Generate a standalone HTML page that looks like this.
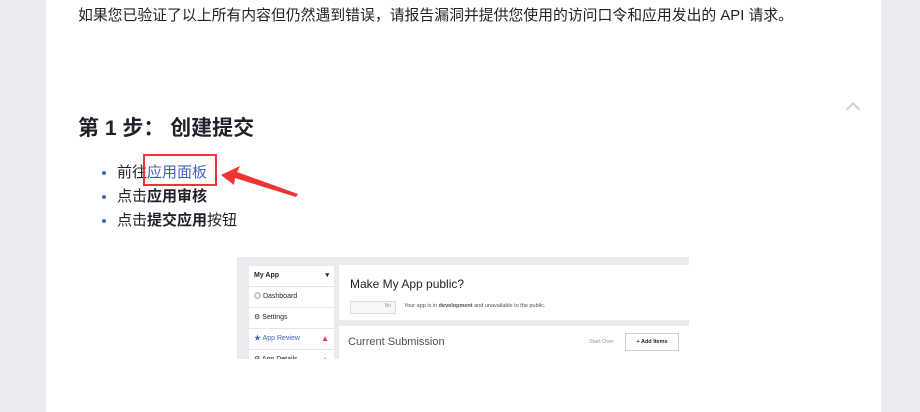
<!DOCTYPE html>
<html><head><meta charset="utf-8"><style>
body{margin:0;width:920px;height:412px;background:#e9ebee;overflow:hidden;font-family:"Liberation Sans","Noto Sans CJK SC",sans-serif;color:#1d2129;position:relative}
.page{position:absolute;left:46px;top:0;width:835px;height:412px;background:#fff}
.t{position:absolute;left:78px;top:4px;font-size:14.85px;color:#1d2129;white-space:nowrap}
h2{position:absolute;left:78px;top:112px;margin:0;font-size:21px;font-weight:bold;color:#1d2129}
ul{position:absolute;left:100px;top:161px;margin:0;padding:0 0 0 17px;font-size:15px;line-height:24px;color:#1d2129}
li{height:24px}
li::marker{color:#4267b2}
a{color:#4267b2;text-decoration:none}
.box{position:absolute;left:143px;top:154px;width:74px;height:32px;border:2px solid #f03434;box-sizing:border-box}
.shot{position:absolute;left:237px;top:257px;width:452px;height:102px;background:#e9ebee;overflow:hidden;font-size:7px;color:#1d2129}
.side{position:absolute;left:12px;top:9px;width:85px;background:#fff}
.side div{height:20px;line-height:20px;border-bottom:1px solid #e5e5e5;padding-left:5px}
.p1{position:absolute;left:102px;top:8px;width:350px;height:55px;background:#fff}
.p2{position:absolute;left:102px;top:69px;width:350px;height:40px;background:#fff}
.tri{color:#e0393e;position:absolute;right:5px;font-size:8px}
</style></head><body>
<div class="page"></div>
<div class="t">如果您已验证了以上所有内容但仍然遇到错误，请报告漏洞并提供您使用的访问口令和应用发出的 API 请求。</div>
<div style="position:absolute;left:848px;top:104px;width:8px;height:8px;border-left:2px solid #ccd0d5;border-top:2px solid #ccd0d5;transform:rotate(45deg)"></div>
<h2>第 1 步： 创建提交</h2>
<ul><li>前往<a>应用面板</a></li><li>点击<b>应用审核</b></li><li>点击<b>提交应用</b>按钮</li></ul>
<div class="box"></div>
<svg style="position:absolute;left:215px;top:163px" width="90" height="38"><path d="M6 12 L25 3 L22 9 L83 31 L81 34 L20 15 L19 22 Z" fill="#f03434"/></svg>
<div class="shot">
<div class="side" style="height:100px">
<div style="font-weight:bold">My App<span style="float:right;margin-right:5px">▾</span></div>
<div>◎ Dashboard</div><div>⚙ Settings</div>
<div style="color:#4267b2;position:relative">★ App Review<span class="tri">▲</span></div>
<div style="position:relative">⚙ App Details<span class="tri">▲</span></div>
</div>
<div class="p1"><div style="position:absolute;left:11px;top:12px;font-size:12px">Make My App public?</div>
<div style="position:absolute;left:11px;top:36px;width:44px;height:11px;border:1px solid #ddd;background:#f6f7f9"><span style="position:absolute;right:4px;top:1px;font-size:5px;color:#999">No</span></div>
<div style="position:absolute;left:65px;top:38px;font-size:5.5px;color:#4b4f56">Your app is in <b>development</b> and unavailable to the public.</div></div>
<div class="p2"><div style="position:absolute;left:9px;top:10px;font-size:11px;color:#4b4f56">Current Submission</div>
<div style="position:absolute;left:250px;top:13px;font-size:5.5px;color:#999">Start Over</div>
<div style="position:absolute;left:286px;top:7px;width:52px;height:16px;border:1px solid #ccc;font-size:5.5px;line-height:16px;text-align:center;font-weight:bold">+ Add Items</div></div>
</div>
</body></html>
